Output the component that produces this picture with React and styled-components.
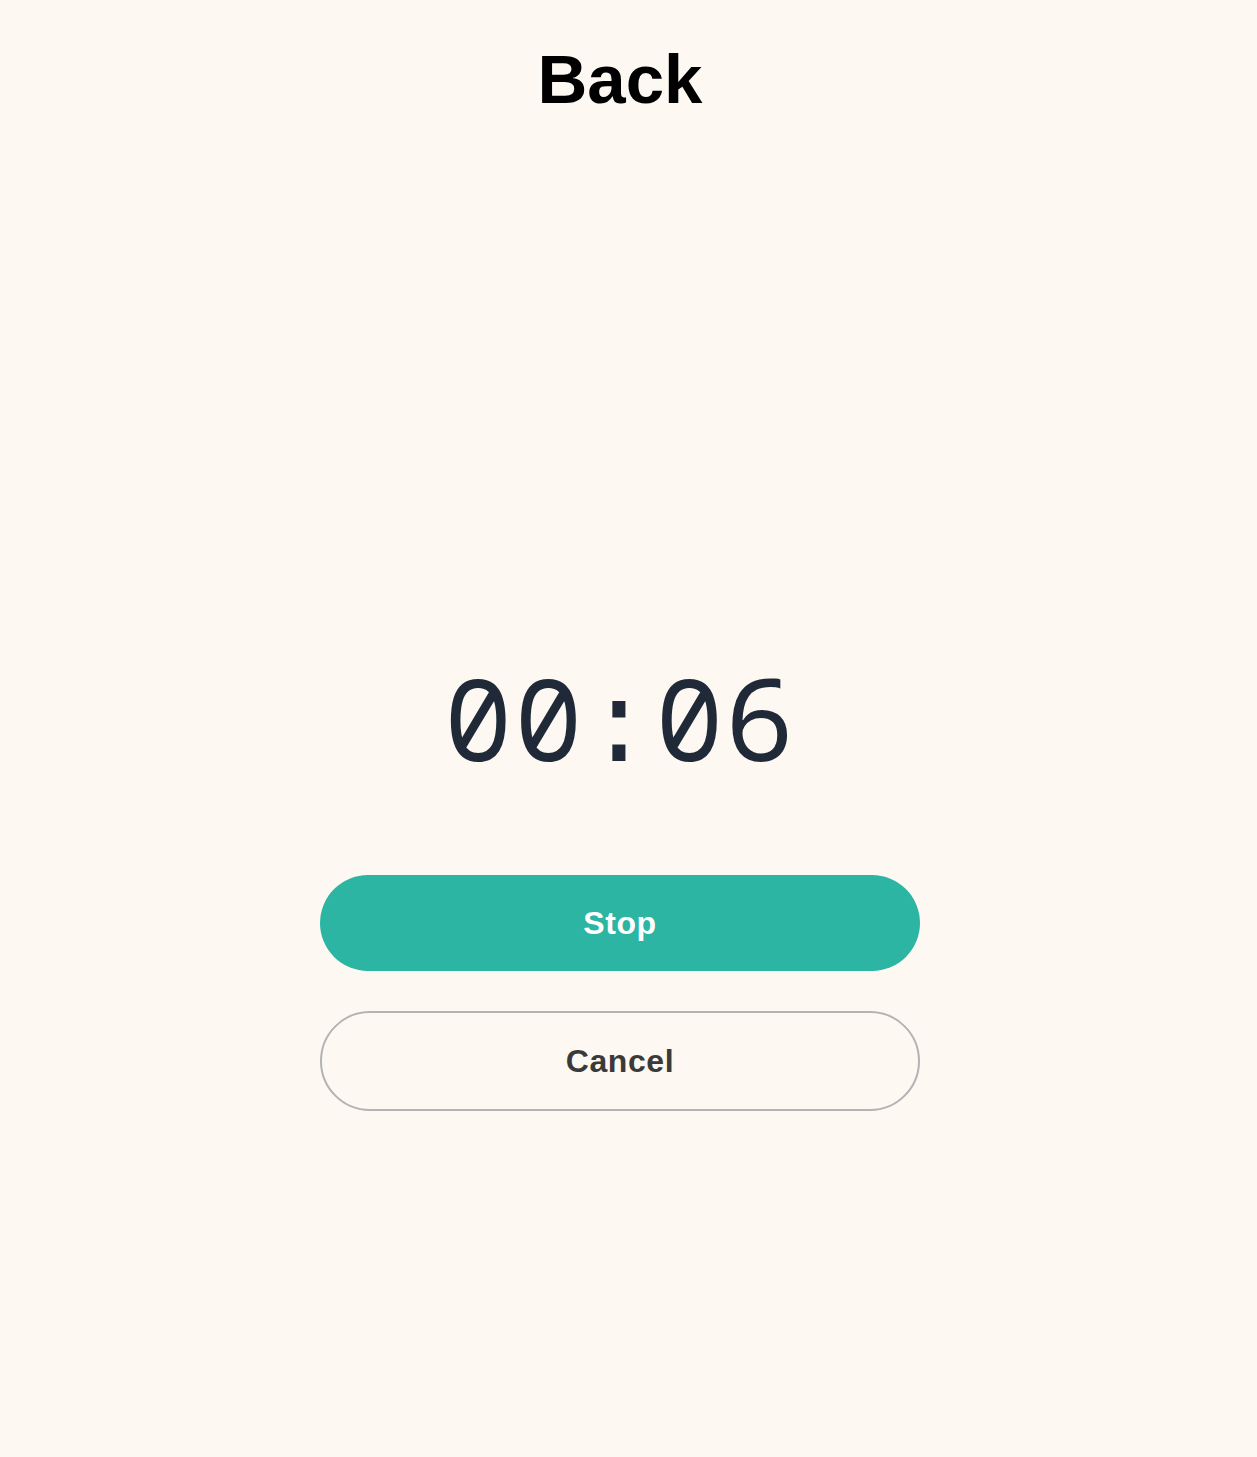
import React from "react";
import styled, { createGlobalStyle } from "styled-components";

const Global = createGlobalStyle`
  body {
    margin: 0;
    background: #fdf9f2;
    font-family: "Liberation Sans", Arial, sans-serif;
  }
`;

const Page = styled.div`
  min-height: 100vh;
  display: flex;
  flex-direction: column;
  align-items: center;
  padding: 40px 17px 0 0;
  box-sizing: border-box;
`;

const Title = styled.h1`
  margin: 0;
  font-size: 69px;
  font-weight: 700;
  color: #000;
  line-height: 79px;
`;

const Timer = styled.div`
  margin-top: 530px;
  font-family: "Noto Sans Mono", "Liberation Mono", monospace;
  font-size: 114px;
  line-height: 136px;
  letter-spacing: 2px;
  color: #1f2937;
  white-space: nowrap;
`;

const Separator = styled.span`
  font-family: "Liberation Mono", "Courier New", monospace;
  line-height: 0;
`;

const Actions = styled.div`
  margin-top: 90px;
  width: 600px;
  display: flex;
  flex-direction: column;
  gap: 40px;
`;

const Button = styled.button`
  width: 100%;
  height: ${(p) => (p.$primary ? "96px" : "100px")};
  border-radius: 999px;
  border: ${(p) => (p.$primary ? "none" : "2px solid #b3b3b3")};
  background: ${(p) => (p.$primary ? "#2db5a3" : "transparent")};
  color: ${(p) => (p.$primary ? "#ffffff" : "#3a3a3a")};
  font-family: "Liberation Sans", Arial, sans-serif;
  font-size: 32px;
  font-weight: 700;
  letter-spacing: 0.6px;
  cursor: pointer;
  padding: 0;
`;

export default function App() {
  return (
    <>
      <Global />
      <Page>
        <Title>Back</Title>
        <Timer>
          00<Separator>:</Separator>06
        </Timer>
        <Actions>
          <Button $primary>Stop</Button>
          <Button>Cancel</Button>
        </Actions>
      </Page>
    </>
  );
}
